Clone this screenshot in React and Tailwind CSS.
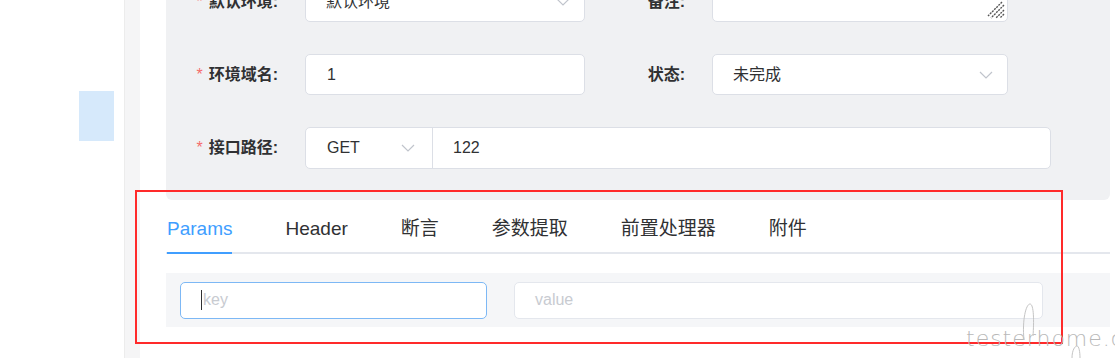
import React from "react";

const font = { fontFamily: '"Liberation Sans", "Noto Sans CJK SC", sans-serif' };

function Chevron({ className = "" }) {
  return (
    <svg className={className} width="14" height="8" viewBox="0 0 14 8" fill="none">
      <path d="M1 1l6 6 6-6" stroke="#c0c4cc" strokeWidth="1.2" />
    </svg>
  );
}

function Label({ children, required, w }) {
  return (
    <div className={`${w} shrink-0 pr-[27px] text-right text-[16px] font-bold text-[#303133]`}>
      {required && <span className="mr-[6px] font-normal text-[#f56c6c]">*</span>}
      {children}
    </div>
  );
}

export default function App() {
  return (
    <div className="relative h-[358px] w-[1115px] overflow-hidden bg-white" style={font}>
      <div className="flex h-full">
        {/* left menu area */}
        <div className="relative w-[124px] shrink-0 bg-white">
          <div className="ml-[79px] mt-[91px] h-[50px] w-[35px] bg-[#d6e9fb]" />
        </div>
        <div className="w-[16px] shrink-0 border-l border-[#ececec] bg-[#f5f5f6]" />
        <div className="flex-1 pl-[26px] pr-[5px]">
          {/* form panel */}
          <div className="-mt-[52px] rounded-b-[6px] bg-[#f0f1f3] pb-[31px] pt-[33px]">
            <div className="flex flex-col gap-[32px]">
              {/* row 1 */}
              <div className="flex items-center">
                <Label w="w-[139px]" required>默认环境:</Label>
                <div className="flex h-[41px] w-[280px] items-center justify-between rounded-[5px] border border-[#dcdfe6] bg-white pl-[20px] pr-[14px] text-[16px] text-[#303133]">
                  <span>默认环境</span>
                  <Chevron />
                </div>
                <Label w="w-[127px]">备注:</Label>
                <div className="relative h-[41px] w-[296px] rounded-[5px] border border-[#dcdfe6] bg-white">
                  <svg className="absolute bottom-[2px] right-[2px]" width="18" height="18" viewBox="0 0 18 18">
                    <path d="M17 4L4 17M17 9L9 17M17 13L13 17M15 1L1 15" stroke="#555" strokeWidth="1.4" strokeDasharray="2 1" />
                  </svg>
                </div>
              </div>
              {/* row 2 */}
              <div className="flex items-center">
                <Label w="w-[139px]" required>环境域名:</Label>
                <div className="flex h-[41px] w-[280px] items-center rounded-[5px] border border-[#dcdfe6] bg-white pl-[21px] text-[16px] text-[#303133]">
                  1
                </div>
                <Label w="w-[127px]">状态:</Label>
                <div className="flex h-[41px] w-[296px] items-center justify-between rounded-[5px] border border-[#dcdfe6] bg-white pl-[20px] pr-[14px] text-[16px] text-[#303133]">
                  <span>未完成</span>
                  <Chevron />
                </div>
              </div>
              {/* row 3 */}
              <div className="flex items-center">
                <Label w="w-[139px]" required>接口路径:</Label>
                <div className="flex h-[42px] w-[746px] rounded-[5px] border border-[#dcdfe6] bg-white text-[16px] text-[#303133]">
                  <div className="flex w-[127px] items-center justify-between border-r border-[#dcdfe6] pl-[21px] pr-[17px]">
                    <span>GET</span>
                    <Chevron />
                  </div>
                  <div className="flex items-center pl-[20px]">122</div>
                </div>
              </div>
            </div>
          </div>

          {/* tabs */}
          <div className="mt-[6px] flex h-[48px] gap-[53px] border-b-2 border-[#e4e7ed] pl-[1px] text-[19px] text-[#303133]">
            <div className="-mb-[2px] flex items-center border-b-2 border-[#409eff] text-[#409eff]">Params</div>
            <div className="flex items-center">Header</div>
            <div className="flex items-center">断言</div>
            <div className="flex items-center">参数提取</div>
            <div className="flex items-center">前置处理器</div>
            <div className="flex items-center">附件</div>
          </div>

          {/* params row */}
          <div className="mt-[19px] flex h-[54px] items-center gap-[27px] bg-[#f5f6f8] pl-[14px] text-[16px]">
            <div className="flex h-[37px] w-[307px] items-center rounded-[5px] border border-[#7db8f5] bg-white pl-[20px]">
              <span className="mr-[1px] inline-block h-[20px] w-[1px] bg-[#303133]" />
              <span className="text-[#c8cbd1]">key</span>
            </div>
            <div className="flex h-[37px] w-[529px] items-center rounded-[5px] border border-[#e4e7ed] bg-white pl-[20px] text-[#c8cbd1]">
              value
            </div>
          </div>
        </div>
      </div>

      {/* red highlight box */}
      <div className="absolute left-[135px] top-[190px] h-[154px] w-[928px] border-2 border-[#ff2a2a]" />

      {/* watermark */}
      <div
        className="absolute left-[966px] top-[322px] text-[22px] tracking-[1px] text-[#b8b8b8]"
        style={{ fontFamily: '"DejaVu Sans", sans-serif', fontWeight: 200 }}
      >
        testerhome.com
      </div>
      <svg className="absolute left-[1020px] top-[300px]" width="80" height="58" viewBox="0 0 80 58" fill="none">
        <path d="M4 40 C2 20 6 4 10 4 C14 4 14 22 13 36" stroke="#c4c4c4" strokeWidth="1" />
        <path d="M52 58 C52 50 55 46 57 46 C59 46 60 52 60 58" stroke="#c4c4c4" strokeWidth="1" />
      </svg>
    </div>
  );
}
